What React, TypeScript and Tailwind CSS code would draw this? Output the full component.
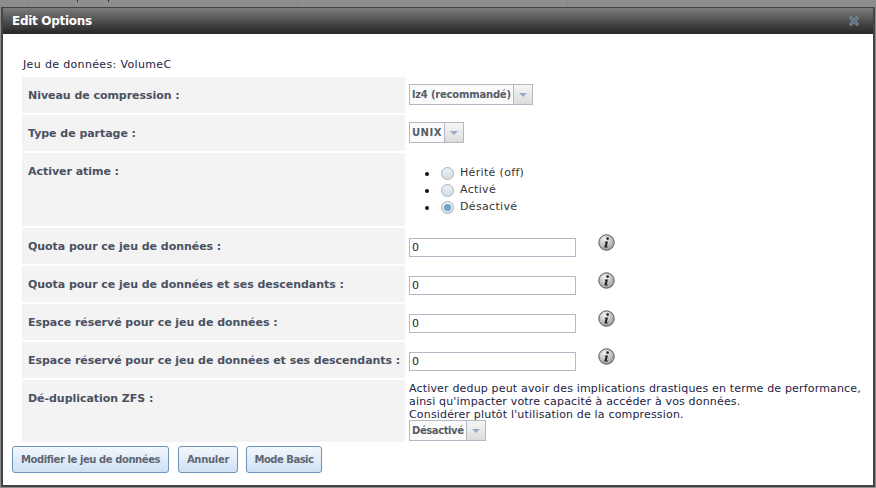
import React from "react";

const font = { fontFamily: '"DejaVu Sans", Verdana, sans-serif' };

function Info() {
  return (
    <svg width="17" height="17" viewBox="0 0 17 17" className="block">
      <defs>
        <radialGradient id="ig" cx="40%" cy="30%" r="75%">
          <stop offset="0%" stopColor="#f4f4f4" />
          <stop offset="100%" stopColor="#9a9a9a" />
        </radialGradient>
      </defs>
      <circle cx="8.5" cy="8.5" r="7.7" fill="url(#ig)" stroke="#555" strokeWidth="1" />
      <circle cx="9.6" cy="4.6" r="1.3" fill="#222" />
      <path d="M6.8 7.4h3.2l-1.3 5h1.1v1H6.3l1.3-5H6.6z" fill="#222" />
    </svg>
  );
}

function Select({ label, className }: { label: string; className: string }) {
  return (
    <div className="flex h-[21px] w-fit border border-[#b3b8c4] bg-[#fafafa]">
      <span className={`flex items-center px-[2px] text-[10px] font-bold text-[#555c6a] ${className}`}>{label}</span>
      <span className="flex w-[19px] items-center justify-center border-l border-[#b3b8c4] bg-gradient-to-b from-[#f6f6f6] to-[#dcdcdc]">
        <span className="h-0 w-0 border-x-[4px] border-t-[4px] border-x-transparent border-t-[#9aa9c4]" />
      </span>
    </div>
  );
}

function Radio({ checked }: { checked?: boolean }) {
  return (
    <span className="flex h-[13px] w-[13px] items-center justify-center rounded-full border border-[#a9b0ba] bg-gradient-to-b from-[#f0f0f0] to-[#cfe0ec]">
      {checked && <span className="h-[7px] w-[7px] rounded-full bg-[#6fa3c8]" />}
    </span>
  );
}

function Label({ children }: { children: React.ReactNode }) {
  return <div className="bg-[#f3f3f3] pl-[6px] text-[11px] font-bold tracking-[-0.04px] text-[#4a5162]">{children}</div>;
}

function NumRow({ label }: { label: string }) {
  return (
    <>
      <Label><div className="flex h-[36px] items-center pt-[3px]">{label}</div></Label>
      <div className="relative h-[36px]">
        <input
          readOnly
          value="0"
          className="absolute left-[4px] top-[10px] h-[19px] w-[167px] border border-[#b3b8c4] bg-white px-[2px] text-[11px] text-[#222]"
          style={font}
        />
        <span className="absolute left-[193px] top-[6px]"><Info /></span>
      </div>
    </>
  );
}

export default function App() {
  return (
    <div className="flex h-[488px] w-[876px] flex-col overflow-hidden bg-[#8d8d8d]" style={font}>
      <div className="flex h-[7px] shrink-0 bg-[#8d8d8d]">
        <div className="w-[28px] border-r border-[#8f8579]" />
        <div className="relative w-[270px] border-r border-[#8f8579]">
          <span className="absolute left-[49px] top-0 h-[2px] w-[1px] bg-[#333]" />
          <span className="absolute left-[80px] top-0 h-[2px] w-[1px] bg-[#333]" />
        </div>
        <div className="w-[270px] border-r border-[#8f8579]" />
        <div className="w-[270px] border-r border-[#8f8579]" />
      </div>
      <div className="ml-[1px] flex h-[480px] w-[874px] flex-col border-2 border-t border-[#444] bg-white">
        <div className="flex h-[26px] shrink-0 items-center justify-between bg-gradient-to-b from-[#7d7d7d] to-[#262626] pb-[1px] pl-[9px] pr-[14px] text-[12px] font-bold tracking-[-0.3px] text-white">
          <span>Edit Options</span>
          <svg width="10" height="10" viewBox="0 0 10 10">
            <path d="M1 1l8 8M9 1l-8 8" stroke="#8b9097" strokeWidth="3.2" />
            <path d="M1.5 1.5l7 7M8.5 1.5l-7 7" stroke="#55738f" strokeWidth="1.8" />
          </svg>
        </div>
        <div className="relative flex-1 pl-[19px]">
          <div className="h-[43px] pl-[1px] pt-[24px] text-[11px] leading-[14px] tracking-[0.35px] text-[#222244]">Jeu de données: VolumeC</div>
          <div className="grid grid-cols-[383px_1fr] gap-y-[2px] text-[11px]">
            <Label><div className="flex h-[36px] items-center pt-[3px]">Niveau de compression :</div></Label>
            <div className="h-[36px] pl-[4px] pt-[7px]"><Select label="lz4 (recommandé)" className="tracking-[-0.2px]" /></div>
            <Label><div className="flex h-[36px] items-center pt-[3px]">Type de partage :</div></Label>
            <div className="h-[36px] pl-[4px] pt-[7px]"><Select label="UNIX" className="tracking-[0.5px]" /></div>
            <Label><div className="h-[73px] pt-[11px]">Activer atime :</div></Label>
            <div className="h-[73px] pt-[12px]">
              <ul className="flex flex-col pl-[20px] tracking-[0.33px] text-[#333]">
                {[["Hérité (off)", false], ["Activé", false], ["Désactivé", true]].map(([t, c]) => (
                  <li key={t as string} className="flex h-[17px] items-center">
                    <span className="mr-[12px] h-[4px] w-[4px] rounded-full bg-[#111]" />
                    <Radio checked={c as boolean} />
                    <span className="ml-[6px]">{t as string}</span>
                  </li>
                ))}
              </ul>
            </div>
            <NumRow label="Quota pour ce jeu de données :" />
            <NumRow label="Quota pour ce jeu de données et ses descendants :" />
            <NumRow label="Espace réservé pour ce jeu de données :" />
            <NumRow label="Espace réservé pour ce jeu de données et ses descendants :" />
            <Label><div className="h-[62px] pt-[11px]">Dé-duplication ZFS :</div></Label>
            <div className="h-[62px] pl-[4px] pt-[2px] leading-[13px] tracking-[0.17px] text-[#222244]">
              <p>Activer dedup peut avoir des implications drastiques en terme de performance,<br />ainsi qu'impacter votre capacité à accéder à vos données.<br />Considérer plutôt l'utilisation de la compression.</p>
              <div className="-mt-[1px]"><Select label="Désactivé" className="tracking-[-0.4px]" /></div>
            </div>
          </div>
          <div className="absolute bottom-[12px] left-[9px] flex">
            <button className="mr-[9px] h-[27px] w-[157px] rounded-[3px] border border-[#6f94b8] bg-gradient-to-b from-[#f3f7fc] to-[#cfe1f6] text-[10px] font-bold tracking-[-0.42px] text-[#5f6673]" style={font}>Modifier le jeu de données</button>
            <button className="mr-[8px] h-[27px] w-[60px] rounded-[3px] border border-[#6f94b8] bg-gradient-to-b from-[#f3f7fc] to-[#cfe1f6] text-[10px] font-bold tracking-[-0.3px] text-[#5f6673]" style={font}>Annuler</button>
            <button className="h-[27px] w-[76px] rounded-[3px] border border-[#6f94b8] bg-gradient-to-b from-[#f3f7fc] to-[#cfe1f6] text-[10px] font-bold tracking-[-0.5px] text-[#5f6673]" style={font}>Mode Basic</button>
          </div>
        </div>
      </div>
    </div>
  );
}
